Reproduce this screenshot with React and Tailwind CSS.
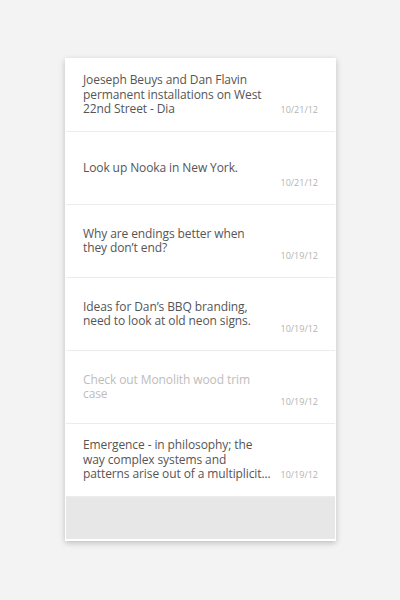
import { Fragment } from 'react';

const NOTES = [
  { lines: ['Joeseph Beuys and Dan Flavin', 'permanent installations on West', '22nd Street - Dia'], date: '10/21/12' },
  { lines: ['Look up Nooka in New York.'], date: '10/21/12' },
  { lines: ['Why are endings better when', 'they don\u2019t end?'], date: '10/19/12' },
  { lines: ['Ideas for Dan\u2019s BBQ branding,', 'need to look at old neon signs.'], date: '10/19/12' },
  { lines: ['Check out Monolith wood trim', 'case'], date: '10/19/12', done: true },
  { lines: ['Emergence - in philosophy; the', 'way complex systems and', 'patterns arise out of a multiplicit...'], date: '10/19/12' },
];

const NoteRow = ({ note }) => (
  <div className="flex h-[73px] border-b border-[#ececec] pl-[17px] pr-[17px]">
    <p
      className={`self-center whitespace-nowrap text-[12px] leading-[14.5px] tracking-[-0.1px] ${note.done ? 'text-[#bdbdbd]' : 'text-[#555555]'}`}
    >
      {note.lines.map((l, i) => (
        <Fragment key={i}>
          {i > 0 && <br />}
          {l}
        </Fragment>
      ))}
    </p>
    <span className="ml-auto self-end mb-[16px] text-[9px] leading-[11px] text-[#b3b3b3]">{note.date}</span>
  </div>
);

export default function App() {
  return (
    <div
      className="w-[400px] h-[600px] bg-[#f3f3f3] pt-[58px] pl-[65px]"
      style={{ fontFamily: '"Open Sans", "Liberation Sans", sans-serif' }}
    >
      <div className="w-[271px] bg-white p-px pb-[2px] shadow-[0_2px_6px_rgba(0,0,0,0.22)]">
        <div className="bg-white">
          {NOTES.map((n, i) => (
            <NoteRow key={i} note={n} />
          ))}
        </div>
        <div className="h-[42px] bg-[#e7e7e7]" />
      </div>
    </div>
  );
}
